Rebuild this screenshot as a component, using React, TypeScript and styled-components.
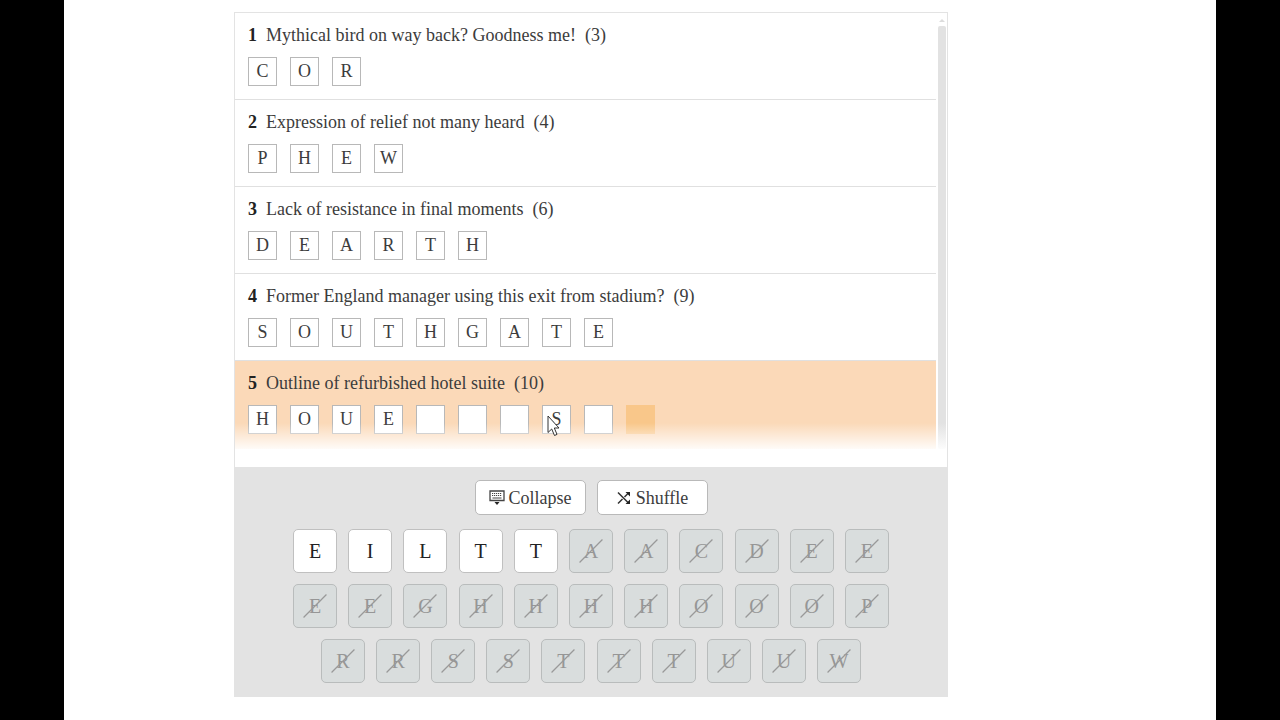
import React from "react";
import styled, { createGlobalStyle } from "styled-components";

const GlobalStyle = createGlobalStyle`
  *, *::before, *::after { box-sizing: border-box; }
  body {
    margin: 0;
    background: #000;
    color: #3c3c3c;
    font-family: "Liberation Serif", "Times New Roman", serif;
    font-size: 18px;
    line-height: 22px;
  }
`;

const Page = styled.main`
  width: 90%;
  min-height: 100vh;
  margin: 0 auto;
  padding-top: 12px;
  background: #fff;
  display: grid;
  grid-template-columns: 170fr 714fr 268fr;
  align-items: start;
`;

const Panel = styled.section`
  grid-column: 2;
  border: 1px solid #e3e3e3;
`;

const ClueArea = styled.div`
  position: relative;
  display: flex;
  padding-right: 1px;
  margin-bottom: 18px;
`;

const ClueList = styled.ol`
  flex: 1;
  min-width: 0;
  margin: 0;
  padding: 0;
  list-style: none;
`;

const Clue = styled.li<{ $active: boolean }>`
  padding: 11px 13px 13px;
  background: ${(p) => (p.$active ? "#fbd9b8" : "#fff")};
  border-bottom: 1px solid ${(p) => (p.$active ? "#fbd9b8" : "#e0e0e0")};

  &:last-child {
    padding-bottom: 14px;
  }
`;

const ClueText = styled.p`
  margin: 0 0 11px;
  display: flex;
  gap: 9px;
`;

const ClueNumber = styled.b`
  color: #222;
`;

const Cells = styled.div`
  display: flex;
  gap: 13px;
`;

const Cell = styled.input<{ $current: boolean }>`
  width: 29px;
  height: 29px;
  padding: 0;
  border: 1px solid ${(p) => (p.$current ? "#f9c78a" : "#b8b8b8")};
  border-radius: 0;
  background: ${(p) => (p.$current ? "#f9c78a" : "#fff")};
  color: #3c3c3c;
  font: inherit;
  text-align: center;
  outline: none;
`;

const Fade = styled.div`
  position: absolute;
  left: 0;
  right: 0;
  bottom: 0;
  height: 26px;
  background: linear-gradient(rgba(255, 255, 255, 0), rgba(255, 255, 255, 0.9));
  pointer-events: none;
`;

const Scrollbar = styled.div`
  width: 8px;
  margin-left: 2px;
  padding-top: 6px;
  display: flex;
  flex-direction: column;
  align-items: center;
  gap: 4px;
`;

const ScrollThumb = styled.div`
  flex: 1;
  width: 8px;
  border-radius: 2px;
  background: #e2e2e2;
`;

const Pointer = styled.svg`
  position: absolute;
  left: 312px;
  top: 402px;
  pointer-events: none;
`;

const Keyboard = styled.div`
  padding: 13px 20px;
  background: #e3e3e3;
  display: flex;
  flex-direction: column;
  align-items: center;
  gap: 11px;
`;

const Actions = styled.div`
  display: flex;
  gap: 11px;
  margin-bottom: 3px;
`;

const ActionButton = styled.button`
  width: 111px;
  height: 35px;
  padding: 0;
  display: flex;
  align-items: center;
  justify-content: center;
  gap: 4px;
  border: 1px solid #b9b9b9;
  border-radius: 5px;
  background: #fff;
  color: #3c3c3c;
  font: inherit;
`;

const KeyRow = styled.div<{ $inset: boolean }>`
  width: 100%;
  max-width: 596px;
  padding: 0 ${(p) => (p.$inset ? 28 : 0)}px;
  display: flex;
  justify-content: space-between;
`;

const Key = styled.button`
  position: relative;
  width: 44px;
  height: 44px;
  padding: 0;
  border: 1px solid #c0c0c0;
  border-radius: 5px;
  background: #fff;
  color: #222;
  font: inherit;
  font-size: 20px;

  &:disabled {
    border-color: #b9bcbc;
    background: #d9dddd;
    color: #969696;
  }
`;

const Strike = styled.svg`
  position: absolute;
  inset: 0;
  width: 100%;
  height: 100%;
`;

const clues = [
  { text: "Mythical bird on way back? Goodness me!", length: 3, letters: "COR" },
  { text: "Expression of relief not many heard", length: 4, letters: "PHEW" },
  { text: "Lack of resistance in final moments", length: 6, letters: "DEARTH" },
  { text: "Former England manager using this exit from stadium?", length: 9, letters: "SOUTHGATE" },
  { text: "Outline of refurbished hotel suite", length: 10, letters: "HOUE   S  " },
];
const activeClue = 4;
const currentCell = 9;

const keyRows = ["EILTTAACDEE", "EEGHHHHOOOP", "RRSSTTTUUW"];
const unusedKeys = 5;

function CollapseIcon() {
  return (
    <svg width="16" height="16" viewBox="0 0 16 16" fill="none" stroke="#444" aria-hidden="true">
      <path d="M1 1H15V10.5H1Z" strokeWidth="1.3" />
      <path d="M3 3.5H13M3 5.5H13" strokeDasharray="1.2 .8" />
      <path d="M3.5 8H12.5" />
      <path d="M5.5 12H10.5L8 15Z" fill="#222" stroke="none" />
    </svg>
  );
}

function ShuffleIcon() {
  return (
    <svg width="16" height="16" viewBox="0 0 16 16" fill="none" stroke="#333" strokeWidth="1.5" aria-hidden="true">
      <path d="M2 2.5L12.5 13M2 13.5L6.5 9M8.5 7L12.5 3" />
      <path d="M9.5 2H14V6.5ZM14 9.5V14H9.5Z" fill="#222" stroke="none" />
    </svg>
  );
}

export default function App() {
  return (
    <>
      <GlobalStyle />
      <Page>
        <Panel>
          <ClueArea>
            <ClueList>
              {clues.map((clue, i) => (
                <Clue key={clue.text} $active={i === activeClue}>
                  <ClueText>
                    <ClueNumber>{i + 1}</ClueNumber>
                    <span>{clue.text}</span>
                    <span>({clue.length})</span>
                  </ClueText>
                  <Cells>
                    {clue.letters.split("").map((letter, j) => (
                      <Cell
                        key={j}
                        $current={i === activeClue && j === currentCell}
                        aria-label={`Clue ${i + 1}, letter ${j + 1}`}
                        maxLength={1}
                        defaultValue={letter.trim()}
                      />
                    ))}
                  </Cells>
                </Clue>
              ))}
            </ClueList>
            <Scrollbar aria-hidden="true">
              <svg width="6" height="3" viewBox="0 0 6 3">
                <path d="M0 3L3 0L6 3Z" fill="#dcdcdc" />
              </svg>
              <ScrollThumb />
            </Scrollbar>
            <Fade />
            <Pointer width="13" height="22" viewBox="0 0 13 22" aria-hidden="true">
              <path
                d="M1 1V17.5L4.7 14L7.5 20.5L10 19.4L7.3 13H12Z"
                fill="#fff"
                stroke="#333"
                strokeWidth="1"
              />
            </Pointer>
          </ClueArea>
          <Keyboard>
            <Actions>
              <ActionButton type="button">
                <CollapseIcon />
                Collapse
              </ActionButton>
              <ActionButton type="button">
                <ShuffleIcon />
                Shuffle
              </ActionButton>
            </Actions>
            {keyRows.map((row, r) => (
              <KeyRow key={row} $inset={r === 2}>
                {row.split("").map((letter, k) => {
                  const used = r > 0 || k >= unusedKeys;
                  return (
                    <Key key={k} type="button" disabled={used}>
                      {letter}
                      {used && (
                        <Strike viewBox="0 0 44 44" aria-hidden="true">
                          <path d="M10 34L34 10" stroke="#999" strokeWidth="1.3" />
                        </Strike>
                      )}
                    </Key>
                  );
                })}
              </KeyRow>
            ))}
          </Keyboard>
        </Panel>
      </Page>
    </>
  );
}
